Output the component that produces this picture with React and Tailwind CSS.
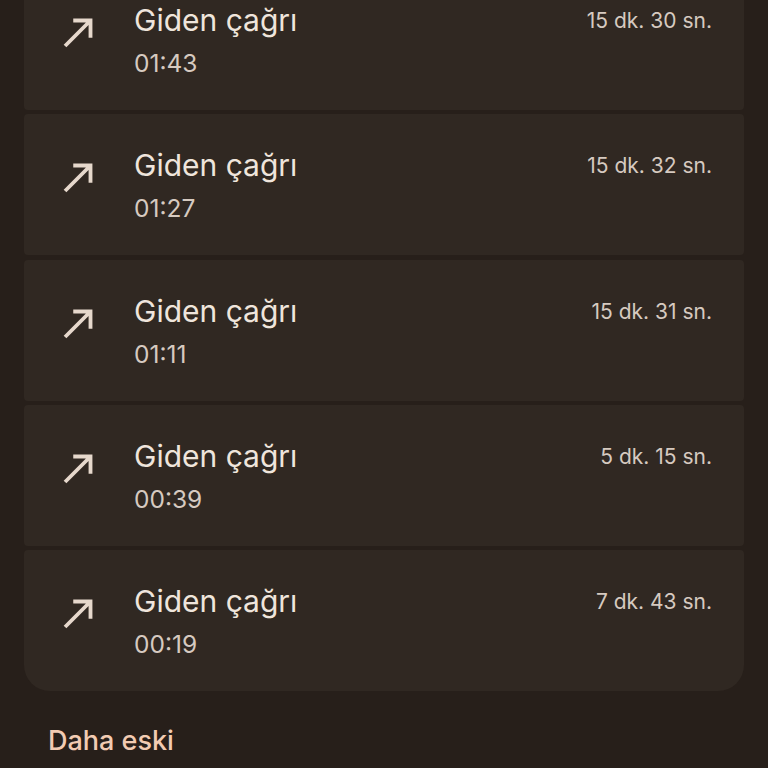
import React from "react";

const calls = [
  { time: "01:43", dur: "15 dk. 30 sn." },
  { time: "01:27", dur: "15 dk. 32 sn." },
  { time: "01:11", dur: "15 dk. 31 sn." },
  { time: "00:39", dur: "5 dk. 15 sn." },
  { time: "00:19", dur: "7 dk. 43 sn." },
];

function CallMade() {
  return (
    <svg viewBox="0 0 24 24" className="w-[46px] h-[46px] shrink-0" fill="#e6d8cc">
      <path d="M9 5v2h6.59L4 18.59 5.41 20 17 8.41V15h2V5z" />
    </svg>
  );
}

export default function App() {
  return (
    <div
      className="w-[768px] h-[768px] overflow-hidden bg-[#271f1a]"
      style={{ fontFamily: "Inter, Roboto, sans-serif" }}
    >
      <div className="mx-6 -mt-[31px] flex flex-col gap-[4.3px]">
        {calls.map((c, i) => (
          <div
            key={i}
            className={
              "h-[141px] bg-[#302822] flex items-start pl-8 pr-8 pt-[40px] " +
              (i === calls.length - 1 ? "rounded-t-[4px] rounded-b-[26px]" : "rounded-[4px]")
            }
          >
            <CallMade />
            <div className="ml-8 flex-1 -mt-[7px]">
              <div className="text-[30px] leading-[36px] text-[#efe5dc]">Giden çağrı</div>
              <div className="mt-[9px] text-[24.5px] leading-[32px] text-[#d6cac0]">{c.time}</div>
            </div>
            <div className="-mt-[4px] text-[21px] leading-[32px] text-[#d6cac0]">{c.dur}</div>
          </div>
        ))}
      </div>
      <div className="mt-[34px] pl-12 text-[27px] leading-[32px] font-medium text-[#f2cbb2]">
        Daha eski
      </div>
    </div>
  );
}
